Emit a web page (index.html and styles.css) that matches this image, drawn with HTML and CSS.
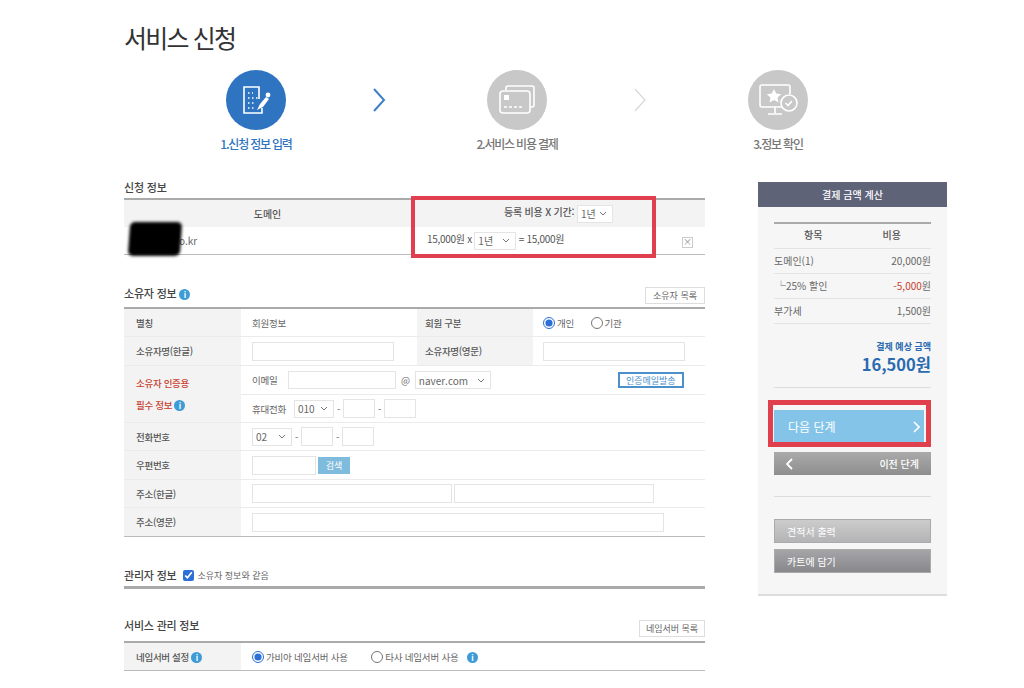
FILE: index.html
```html
<!DOCTYPE html>
<html lang="ko">

<head>
  <meta charset="UTF-8">
  <title>서비스 신청</title>
  <link rel="stylesheet" href="styles.css">
</head>

<body>
  <div class="page">
    <h1 class="title">서비스 신청</h1>

    <div class="steps">
      <div class="step step-on">
        <div class="step-circle">
          <svg width="34" height="34" viewBox="0 0 34 34" fill="none" stroke="#fff" stroke-width="1.6">
            <path d="M20 16V4H5v26h18v-5" />
            <path d="M9 10h2M13 10h1M9 15h2M13 15h2M17 15h2M9 20h2M13 20h2M9 25h2M13 25h2" stroke-dasharray="1.5 1" />
            <path d="M18 27l3-6 6-7 3 2-6 8z" fill="#fff" stroke="none" />
            <circle cx="29" cy="12" r="2.4" fill="#fff" stroke="none" />
          </svg>
        </div>
        <div class="step-label">1.신청 정보 입력</div>
      </div>
      <svg class="step-arrow" width="20" height="26" viewBox="0 0 20 26" fill="none" stroke="#3f7fc4" stroke-width="2">
        <path d="M5 2l10 11L5 24" />
      </svg>
      <div class="step">
        <div class="step-circle">
          <svg width="38" height="32" viewBox="0 0 38 32" fill="none" stroke="#fff" stroke-width="1.6">
            <path d="M8 6V4q0-2 2-2h24q2 0 2 2v17q0 2-2 2h-2" />
            <rect x="2" y="7" width="30" height="22" rx="3" />
            <rect x="6" y="11" width="5" height="5" fill="#fff" stroke="none" />
            <path d="M6 23h3M11 23h3M16 23h3M21 23h3" />
          </svg>
        </div>
        <div class="step-label">2.서비스 비용 결제</div>
      </div>
      <svg class="step-arrow" width="20" height="26" viewBox="0 0 20 26" fill="none" stroke="#d8d8d8" stroke-width="1.2">
        <path d="M5 2l10 11L5 24" />
      </svg>
      <div class="step">
        <div class="step-circle">
          <svg width="42" height="36" viewBox="0 0 42 36" fill="none" stroke="#fff" stroke-width="1.6">
            <path d="M27 25H5q-2 0-2-2V5q0-2 2-2h26q2 0 2 2v7" />
            <path d="M18 25v6M11 32h14" />
            <path d="M17 7l2.200 4.600 5 .6-3.700 3.400 1 5-4.500-2.500-4.500 2.500 1-5-3.700-3.400 5-.6z" fill="#fff" stroke="none" />
            <circle cx="32" cy="21" r="8" fill="#c8c8c8" />
            <path d="M28.500 21l2.500 2.500 4-4.500" />
          </svg>
        </div>
        <div class="step-label">3.정보 확인</div>
      </div>
    </div>

    <div class="content">
      <div class="main">
        <section class="sec sec-apply">
          <div class="sec-head">
            <h2>신청 정보</h2>
          </div>
          <table class="grid">
            <colgroup>
              <col class="col-domain">
              <col class="col-cost">
              <col>
            </colgroup>
            <tr class="row-head">
              <th>도메인</th>
              <th class="cost-head">등록 비용 X 기간: <select class="sel sel-year">
                  <option>1년</option>
                </select></th>
              <th></th>
            </tr>
            <tr>
              <td class="domain-name">o.kr</td>
              <td class="cost-cell">15,000원 x <select class="sel sel-year2">
                  <option>1년</option>
                </select> = 15,000원</td>
              <td class="del-cell"><span class="del">×</span></td>
            </tr>
          </table>
          <div class="blackout"></div>
          <div class="mark mark-cost"></div>
        </section>

        <section class="sec sec-owner">
          <div class="sec-head">
            <h2>소유자 정보 <span class="info">i</span></h2>
            <button class="btn-small">소유자 목록</button>
          </div>
          <table class="grid form">
            <colgroup>
              <col class="col-l1">
              <col class="col-v1">
              <col class="col-l2">
              <col>
            </colgroup>
            <tr>
              <th>별칭</th>
              <td>회원정보</td>
              <th class="th-mid">회원 구분</th>
              <td class="td-end">
                <label class="radio"><input type="radio" name="kind" checked>개인</label>
                <label class="radio"><input type="radio" name="kind">기관</label>
              </td>
            </tr>
            <tr class="row-tall">
              <th>소유자명(한글)</th>
              <td><input class="inp w142" type="text"></td>
              <th class="th-mid">소유자명(영문)</th>
              <td class="td-end"><input class="inp w142" type="text"></td>
            </tr>
            <tr class="row-tall">
              <th rowspan="2" class="must">소유자 인증용<br>필수 정보 <span class="info">i</span></th>
              <td colspan="3">
                <div class="line">
                  <span class="cap-mail">이메일</span>
                  <input class="inp w108 short" type="text">
                  <span class="at">@</span>
                  <select class="sel sel-mail">
                    <option>naver.com</option>
                  </select>
                  <button class="btn-send">인증메일발송</button>
                </div>
              </td>
            </tr>
            <tr>
              <td colspan="3">
                <div class="line">
                  <span class="cap-phone">휴대전화</span>
                  <select class="sel sel-num">
                    <option>010</option>
                  </select>
                  <span>-</span>
                  <input class="inp w32" type="text">
                  <span>-</span>
                  <input class="inp w32" type="text">
                </div>
              </td>
            </tr>
            <tr>
              <th>전화번호</th>
              <td colspan="3">
                <div class="line">
                  <select class="sel sel-num">
                    <option>02</option>
                  </select>
                  <span>-</span>
                  <input class="inp w32" type="text">
                  <span>-</span>
                  <input class="inp w32" type="text">
                </div>
              </td>
            </tr>
            <tr class="row-tall">
              <th>우편번호</th>
              <td colspan="3">
                <div class="line line-tight">
                  <input class="inp w64" type="text">
                  <button class="btn-search">검색</button>
                </div>
              </td>
            </tr>
            <tr>
              <th>주소(한글)</th>
              <td colspan="3">
                <div class="line line-tight">
                  <input class="inp w200" type="text">
                  <input class="inp w200" type="text">
                </div>
              </td>
            </tr>
            <tr class="row-tall">
              <th>주소(영문)</th>
              <td colspan="3"><input class="inp w412" type="text"></td>
            </tr>
          </table>
        </section>

        <section class="sec sec-admin">
          <h2>관리자 정보</h2>
          <label class="check"><input type="checkbox" checked>소유자 정보와 같음</label>
        </section>

        <section class="sec sec-service">
          <div class="sec-head">
            <h2>서비스 관리 정보</h2>
            <button class="btn-small">네임서버 목록</button>
          </div>
          <table class="grid form">
            <colgroup>
              <col class="col-l1">
              <col>
            </colgroup>
            <tr>
              <th>네임서버 설정 <span class="info">i</span></th>
              <td>
                <label class="radio radio-ns"><input type="radio" name="ns" checked>가비아 네임서버 사용</label>
                <label class="radio radio-last"><input type="radio" name="ns">타사 네임서버 사용</label>
                <span class="info info-ns">i</span>
              </td>
            </tr>
          </table>
        </section>
      </div>

      <aside class="side">
        <div class="side-title">결제 금액 계산</div>
        <div class="side-body">
          <div class="calc-head"><span>항목</span><span>비용</span></div>
          <div class="calc-row"><span>도메인(1)</span><span>20,000원</span></div>
          <div class="calc-row calc-sub"><span>└25% 할인</span><span><em>-5,000</em>원</span></div>
          <div class="calc-row"><span>부가세</span><span>1,500원</span></div>
          <div class="total">
            <div class="total-cap">결제 예상 금액</div>
            <div class="total-num">16,500원</div>
          </div>
          <div class="btn-group">
            <button class="btn-next">다음 단계
              <svg width="7" height="12" viewBox="0 0 7 12" fill="none" stroke="#fff" stroke-width="1.6">
                <path d="M1 1l5 5-5 5" />
              </svg>
            </button>
            <button class="btn-prev">
              <svg width="7" height="12" viewBox="0 0 7 12" fill="none" stroke="#fff" stroke-width="1.8">
                <path d="M6 1L1 6l5 5" />
              </svg>이전 단계
            </button>
            <div class="mark mark-next"></div>
          </div>
          <div class="btn-group2">
            <button class="btn-gray btn-light">견적서 출력</button>
            <button class="btn-gray">카트에 담기</button>
          </div>
        </div>
      </aside>
    </div>
  </div>
</body>

</html>
```

FILE: styles.css
```css
body {
  margin: 0;
  background: #fff;
  color: #555;
  font-family: "Noto Sans CJK KR", "Noto Sans", sans-serif;
  font-size: 10px;
}

.page {
  padding-left: 124px;
  width: 823px;
}

.title {
  margin: 0;
  padding-top: 19px;
  font-size: 25px;
  line-height: 36px;
  font-weight: 400;
  letter-spacing: -1.8px;
  color: #333;
}

/* steps */
.steps {
  display: flex;
  align-items: flex-start;
  margin: 15px 0 0 72px;
}

.step {
  width: 120px;
  text-align: center;
}

.step-circle {
  width: 60px;
  height: 60px;
  margin: 0 auto;
  border-radius: 50%;
  background: #c8c8c8;
  display: flex;
  align-items: center;
  justify-content: center;
}

.step-on .step-circle {
  background: #2e74c0;
}

.step-label {
  margin-top: 6px;
  font-size: 12px;
  line-height: 16px;
  letter-spacing: -1.2px;
  color: #777;
  font-weight: 500;
}

.step-on .step-label {
  color: #2e74c0;
}

.step-arrow {
  margin: 17px 68px 0 53px;
}

/* main column */
.content {
  display: flex;
  gap: 53px;
  margin-top: 27px;
}

.main {
  width: 581px;
}

.sec {
  position: relative;
}

.sec h2 {
  margin: 0;
  font-size: 11px;
  line-height: 16px;
  font-weight: 500;
  letter-spacing: -0.2px;
  color: #444;
}

.sec-head {
  display: flex;
  justify-content: space-between;
  height: 20px;
  margin-bottom: 2px;
}

.sec-apply .sec-head {
  height: 17px;
  margin-bottom: 2px;
}

.sec-owner {
  margin-top: 30px;
}

.sec-admin {
  margin-top: 30px;
  padding-bottom: 3px;
  border-bottom: 3px solid #aaa;
  display: flex;
  align-items: center;
  gap: 7px;
}

.sec-service {
  margin-top: 28px;
}

.sec-service .sec-head {
  height: 23px;
  margin-bottom: 1px;
}

.grid {
  width: 100%;
  border-collapse: collapse;
  table-layout: fixed;
  border-top: 2px solid #aaa;
  border-bottom: 1px solid #bbb;
}

.grid th {
  font-weight: 500;
  color: #555;
}

.grid td,
.grid th {
  height: 27px;
  padding: 0;
}

.grid .row-tall td,
.grid .row-tall th {
  height: 28px;
}

.col-domain {
  width: 287px;
}

.col-cost {
  width: 245px;
}

.row-head th {
  background: #f3f3f3;
  text-align: center;
  font-weight: 500;
}

.grid .cost-head {
  padding-left: 50px;
  letter-spacing: -0.2px;
}

.grid .domain-name {
  padding-left: 55px;
  color: #666;
}

.grid .cost-cell {
  padding-left: 16px;
  color: #555;
  letter-spacing: -0.3px;
}

.grid .del-cell {
  text-align: right;
  padding-right: 12px;
}

.del {
  display: inline-block;
  width: 9px;
  height: 9px;
  line-height: 8px;
  border: 1px solid #ccc;
  color: #888;
  font-size: 9px;
  text-align: center;
}

.blackout {
  position: absolute;
  left: 5px;
  top: 43px;
  width: 52px;
  height: 34px;
  background: #000;
  border-radius: 5px;
  filter: blur(1.5px);
  transform: skewX(-4deg);
}

.mark {
  position: absolute;
  border: 4px solid #e0404e;
  box-sizing: border-box;
  pointer-events: none;
}

.mark-cost {
  left: 287px;
  top: 17px;
  width: 245px;
  height: 62px;
}

/* form tables */
.col-l1 {
  width: 117px;
}

.col-v1 {
  width: 176px;
}

.col-l2 {
  width: 116px;
}

.form tr + tr th,
.form tr + tr td {
  border-top: 1px solid #ebebeb;
}

.grid.form th {
  background: #f3f3f3;
  text-align: left;
  padding-left: 12px;
  font-size: 9.5px;
  letter-spacing: -0.3px;
}

.grid.form td {
  padding-left: 11px;
  color: #666;
  font-size: 9.5px;
  letter-spacing: -0.2px;
}

.grid.form .th-mid {
  padding-left: 8px;
}

.grid.form .td-end {
  padding-left: 10px;
}

.grid.form .must {
  color: #c8402f;
  line-height: 22px;
}

.info {
  display: inline-block;
  width: 11px;
  height: 11px;
  line-height: 11px;
  border-radius: 50%;
  background: #3d9bd6;
  color: #fff;
  font-size: 8px;
  font-weight: 700;
  text-align: center;
  letter-spacing: 0;
}

.info-ns {
  margin-left: 6px;
  vertical-align: middle;
}

.radio {
  display: inline-flex;
  align-items: center;
  margin-right: 14px;
  vertical-align: middle;
}

.radio input {
  width: 12px;
  height: 12px;
  margin: 0 2px 0 0;
  accent-color: #2c6fd6;
}

.radio-ns {
  margin-right: 21px;
}

.radio-last {
  margin-right: 0;
}

.check {
  display: flex;
  align-items: center;
  color: #666;
  font-size: 9px;
}

.check input {
  width: 11px;
  height: 11px;
  margin: 0 3px 0 0;
  accent-color: #2c6fd6;
}

.line {
  display: flex;
  align-items: center;
  gap: 3px;
}

.line-tight {
  gap: 2px;
}

.inp {
  box-sizing: border-box;
  height: 19px;
  border: 1px solid #e4e4e4;
  background: #fff;
  padding: 0;
  display: block;
}

.short {
  height: 18px;
}

.w32 {
  width: 32px;
}

.w64 {
  width: 64px;
}

.w108 {
  width: 108px;
}

.w142 {
  width: 142px;
}

.w200 {
  width: 200px;
}

.w412 {
  width: 412px;
}

.sel {
  box-sizing: border-box;
  height: 18px;
  border: 1px solid #e4e4e4;
  color: #666;
  font-family: inherit;
  font-size: 10px;
  padding: 0 0 0 3px;
  appearance: none;
  background: #fff url("data:image/svg+xml,%3Csvg xmlns='http://www.w3.org/2000/svg' width='8' height='5' viewBox='0 0 8 5'%3E%3Cpath d='M1 1l3 3 3-3' fill='none' stroke='%23777'/%3E%3C/svg%3E") no-repeat right 5px center;
  vertical-align: middle;
}

.sel-year {
  width: 36px;
}

.sel-year2 {
  width: 42px;
}

.sel-mail {
  width: 76px;
}

.sel-num {
  width: 40px;
}

.cap-mail {
  width: 33px;
}

.cap-phone {
  width: 39px;
}

.at {
  margin: 0 2px;
}

.btn-small {
  box-sizing: border-box;
  height: 17px;
  width: 60px;
  margin-top: 2px;
  padding: 0;
  border: 1px solid #ddd;
  background: #fff;
  color: #666;
  font-family: inherit;
  font-size: 9px;
}

.sec-service .btn-small {
  width: 66px;
  margin-top: 3px;
}

.btn-send {
  box-sizing: border-box;
  width: 66px;
  height: 16px;
  margin-left: 124px;
  padding: 0;
  border: 2px solid #4b8fcb;
  background: #fff;
  color: #4b8fcb;
  font-family: inherit;
  font-size: 9px;
}

.btn-search {
  width: 32px;
  height: 17px;
  padding: 0;
  border: 0;
  background: #7fbbdc;
  color: #fff;
  font-family: inherit;
  font-size: 9px;
}

/* right panel */
.side {
  width: 189px;
  margin-top: 3px;
  align-self: flex-start;
  background: #f6f6f6;
  border-bottom: 2px solid #ddd;
}

.side-title {
  height: 25px;
  line-height: 25px;
  background: #5e6378;
  color: #fff;
  text-align: center;
  font-weight: 500;
  font-size: 10px;
}

.side-body {
  padding: 15px 16px 21px;
}

.calc-head {
  display: grid;
  grid-template-columns: 1fr 1fr;
  height: 24px;
  line-height: 22px;
  border-top: 2px solid #aaa;
  text-align: center;
  color: #555;
  font-weight: 500;
}

.calc-row {
  display: flex;
  justify-content: space-between;
  height: 24px;
  line-height: 24px;
  border-top: 1px solid #e4e4e4;
  color: #666;
}

.calc-row em {
  font-style: normal;
  color: #c8402f;
}

.calc-sub > span:first-child {
  padding-left: 2px;
}

.total {
  border-top: 1px solid #e4e4e4;
  padding: 16px 0 13px;
  border-bottom: 1px solid #ddd;
  text-align: right;
}

.total-cap {
  font-size: 9px;
  line-height: 14px;
  color: #2a6ab0;
  font-weight: 700;
}

.total-num {
  font-size: 16.500px;
  line-height: 20px;
  color: #2a6ab0;
  font-weight: 700;
}

.btn-group {
  position: relative;
  padding: 22px 0 21px;
  border-bottom: 1px solid #ddd;
}

.btn-next,
.btn-prev,
.btn-gray {
  display: flex;
  justify-content: space-between;
  align-items: center;
  width: 100%;
  border: 0;
  padding: 0 12px;
  font-family: inherit;
  color: #fff;
}

.btn-next {
  width: 150px;
  height: 33px;
  padding: 0 4px 0 14px;
  background: #84c4e8;
  font-size: 12px;
}

.btn-prev {
  height: 23px;
  margin-top: 9px;
  background: linear-gradient(#aaa, #8e8e8e);
  font-size: 10px;
  font-weight: 500;
}

.mark-next {
  left: -6px;
  top: 12px;
  width: 163px;
  height: 47px;
  border-width: 5px;
}

.btn-group2 {
  padding-top: 22px;
}

.btn-gray {
  height: 24px;
  margin-bottom: 6px;
  border: 1px solid #aaa;
  box-sizing: border-box;
  background: linear-gradient(#a5a5a8, #88888c);
  font-size: 10px;
}

.btn-gray:last-child {
  margin-bottom: 0;
}

.btn-light {
  background: linear-gradient(#ccc, #b4b4b6);
}
```
